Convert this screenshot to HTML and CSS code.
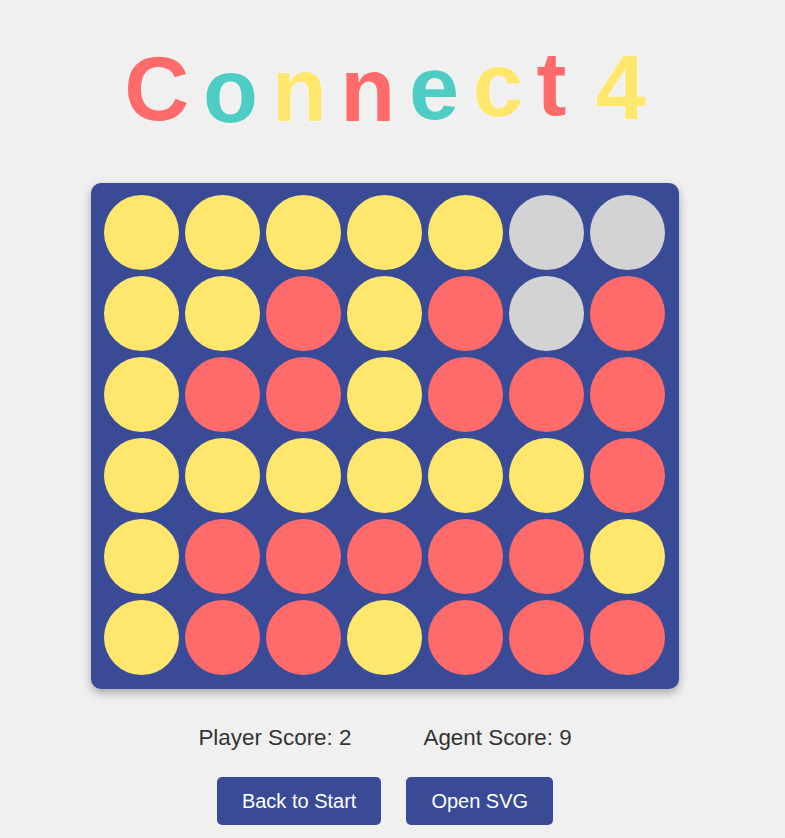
FILE: index.html
```html
<!DOCTYPE html>
<html lang="en">
<head>
<meta charset="utf-8">
<title>Connect 4</title>
<link rel="stylesheet" href="styles.css">
</head>
<body>
<div class="page">
  <h1 class="title">
    <span class="ch red l1">C</span>
    <span class="ch teal l2">o</span>
    <span class="ch yellow l3">n</span>
    <span class="ch red l4">n</span>
    <span class="ch teal l5">e</span>
    <span class="ch yellow l6">c</span>
    <span class="ch red l7">t</span>
    <span class="ch yellow l8 four">4</span>
  </h1>

  <div class="board">
    <div class="cell y"></div><div class="cell y"></div><div class="cell y"></div><div class="cell y"></div><div class="cell y"></div><div class="cell e"></div><div class="cell e"></div>
    <div class="cell y"></div><div class="cell y"></div><div class="cell r"></div><div class="cell y"></div><div class="cell r"></div><div class="cell e"></div><div class="cell r"></div>
    <div class="cell y"></div><div class="cell r"></div><div class="cell r"></div><div class="cell y"></div><div class="cell r"></div><div class="cell r"></div><div class="cell r"></div>
    <div class="cell y"></div><div class="cell y"></div><div class="cell y"></div><div class="cell y"></div><div class="cell y"></div><div class="cell y"></div><div class="cell r"></div>
    <div class="cell y"></div><div class="cell r"></div><div class="cell r"></div><div class="cell r"></div><div class="cell r"></div><div class="cell r"></div><div class="cell y"></div>
    <div class="cell y"></div><div class="cell r"></div><div class="cell r"></div><div class="cell y"></div><div class="cell r"></div><div class="cell r"></div><div class="cell r"></div>
  </div>

  <div class="scores">
    <span class="score">Player Score: 2</span>
    <span class="score">Agent Score: 9</span>
  </div>

  <div class="actions">
    <button class="btn" type="button">Back to Start</button>
    <button class="btn" type="button">Open SVG</button>
  </div>
</div>
</body>
</html>
```

FILE: styles.css
```css
html, body {
  margin: 0;
  padding: 0;
  background: #f0f0f0;
}

body {
  font-family: "Liberation Sans", Arial, sans-serif;
  color: #333333;
}

.page {
  width: 770px;
  display: flex;
  flex-direction: column;
  align-items: center;
  padding-top: 45px;
}

.title {
  margin: 0;
  display: flex;
  align-items: baseline;
  gap: 13.7px;
  font-family: "Liberation Sans", Arial, sans-serif;
  font-weight: 700;
  font-size: 90px;
  line-height: 90px;
  height: 90px;
  text-shadow: 0 0 3px rgba(255, 255, 255, 0.7);
}

.ch {
  display: inline-block;
}

.four {
  margin-left: 15.5px;
}

.red { color: #ff6b6b; }
.teal { color: #4ecdc4; }
.yellow { color: #ffe66d; }

.l1 { transform: translateY(-1.3px); }
.l2 { transform: translateY(1px); }
.l3 { transform: translateY(0); }
.l4 { transform: translateY(-0.3px); }
.l5 { transform: translateY(-2.3px); }
.l6 { transform: translateY(-4.6px); }
.l7 { transform: translateY(-6.3px); }
.l8 { transform: translateY(-2px); }

.board {
  margin-top: 48px;
  background: #394b96;
  border-radius: 10px;
  padding: 12px 14px 14px 13px;
  display: grid;
  grid-template-columns: repeat(7, 75px);
  grid-auto-rows: 75px;
  gap: 6px;
  box-shadow: 0 4px 10px rgba(0, 0, 0, 0.3);
}

.cell {
  border-radius: 50%;
}

.cell.y { background: #ffe66d; }
.cell.r { background: #ff6b6b; }
.cell.e { background: #d3d3d3; }

.scores {
  margin-top: 36px;
  display: flex;
  gap: 72px;
  font-size: 22.4px;
  line-height: 26px;
  color: #333333;
}

.actions {
  margin-top: 25.5px;
  display: flex;
  gap: 25px;
}

.btn {
  font-family: "Liberation Sans", Arial, sans-serif;
  font-size: 20px;
  line-height: 24px;
  padding: 12px 25px;
  border: none;
  border-radius: 5px;
  background: #394b96;
  color: #ffffff;
  cursor: pointer;
}
```
